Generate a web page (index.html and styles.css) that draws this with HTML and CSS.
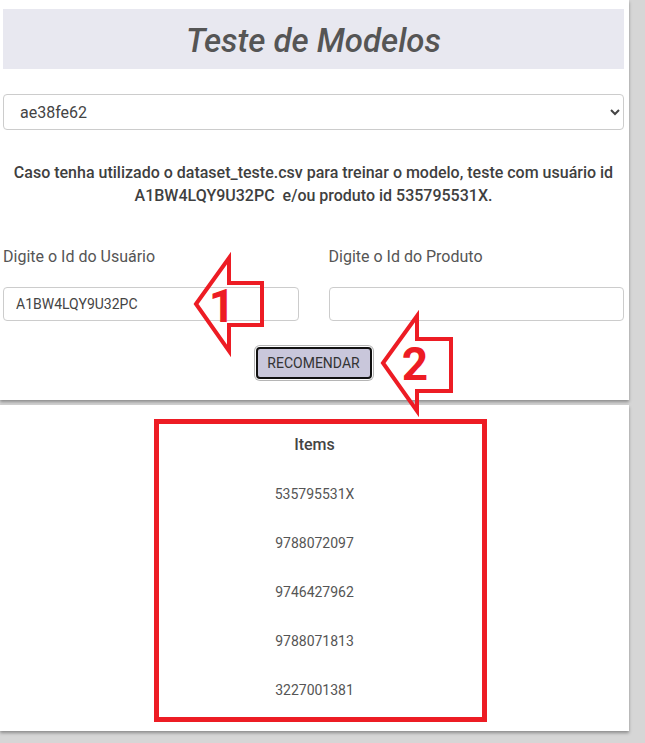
FILE: index.html
```html
<!DOCTYPE html>
<html lang="pt-BR">
<head>
<meta charset="utf-8">
<title>Teste de Modelos</title>
<link rel="stylesheet" href="styles.css">
</head>
<body>
<div class="page">
  <section class="card card-form">
    <header class="banner"><h1 class="title">Teste de Modelos</h1></header>
    <select class="model-select">
      <option>ae38fe62</option>
    </select>
    <p class="hint">Caso tenha utilizado o dataset_teste.csv para treinar o modelo, teste com usuário id<br>A1BW4LQY9U32PC&nbsp; e/ou produto id 535795531X.</p>
    <div class="fields">
      <label class="field">
        <span class="field-label">Digite o Id do Usuário</span>
        <input class="field-input" type="text" value="A1BW4LQY9U32PC">
      </label>
      <label class="field">
        <span class="field-label">Digite o Id do Produto</span>
        <input class="field-input" type="text" value="">
      </label>
    </div>
    <div class="actions"><button class="btn" type="button">RECOMENDAR</button></div>
  </section>
  <section class="card card-results">
    <ul class="items">
      <li class="items-title">Items</li>
      <li>535795531X</li>
      <li>9788072097</li>
      <li>9746427962</li>
      <li>9788071813</li>
      <li>3227001381</li>
    </ul>
  </section>
  <svg class="annotations" width="645" height="743" viewBox="0 0 645 743" aria-hidden="true">
    <g fill="none" stroke="#ed1c24" stroke-width="4" stroke-linejoin="miter">
      <polygon points="196,304 229,258 229,283 262,283 262,325 229,325 229,351"/>
      <polygon points="383,363 417,316 417,339 451,339 451,391 417,391 417,411"/>
      <rect x="156.5" y="421.5" width="328" height="298" stroke-width="5"/>
    </g>
    <text class="num" x="222" y="322" text-anchor="middle">1</text>
    <text class="num" x="415" y="380" text-anchor="middle">2</text>
  </svg>
</div>
</body>
</html>
```
FILE: styles.css
```css
html, body {
  margin: 0;
  padding: 0;
}
body {
  background: #d6d6d6;
  font-family: Roboto, "Liberation Sans", sans-serif;
  color: #444;
  width: 645px;
  height: 743px;
  overflow: hidden;
}
.page {
  position: relative;
  width: 645px;
  height: 743px;
}
.card {
  background: #fff;
  width: 629px;
  box-sizing: border-box;
  box-shadow: 0 2px 3px rgba(0, 0, 0, 0.35);
}
.card-form {
  padding: 9px 5px 21px 3px;
  display: flex;
  flex-direction: column;
}
.banner {
  background: #e8e8f0;
  height: 60px;
  display: flex;
  align-items: center;
  justify-content: center;
}
.title {
  margin: 2px 0 0;
  font-size: 33px;
  font-style: italic;
  font-weight: 500;
  color: #555;
  line-height: 1;
}
.model-select {
  margin-top: 25px;
  height: 36px;
  border: 1px solid #ccc;
  border-radius: 4px;
  background: #fff;
  font-family: Roboto, sans-serif;
  font-size: 16px;
  color: #444;
  padding: 0 12px;
}
.hint {
  margin: 31px 0 0;
  text-align: center;
  font-weight: 500;
  font-size: 16px;
  line-height: 23px;
  color: #3f3f3f;
}
.fields {
  margin-top: 40px;
  display: grid;
  grid-template-columns: 1fr 1fr;
  column-gap: 30px;
}
.field {
  display: flex;
  flex-direction: column;
}
.field-label {
  font-size: 16px;
  line-height: 19px;
  color: #555;
}
.field-input {
  margin-top: 21px;
  height: 34px;
  box-sizing: border-box;
  border: 1px solid #ccc;
  border-radius: 4px;
  padding: 0 12px;
  font-family: Roboto, sans-serif;
  font-size: 14px;
  color: #444;
  background: #fff;
}
.actions {
  margin-top: 26px;
  display: flex;
  justify-content: center;
}
.btn {
  height: 32px;
  width: 116px;
  box-sizing: border-box;
  background: #c9c7db;
  border: 2px solid #111;
  border-radius: 4px;
  box-shadow: 0 0 0 1px #fff, 0 0 0 2px #b5b5b5;
  font-family: Roboto, sans-serif;
  font-size: 14px;
  color: #333;
  padding: 0;
}
.card-results {
  margin-top: 5px;
  padding: 30px 0 31px;
}
.items {
  list-style: none;
  margin: 0;
  padding: 0;
  display: flex;
  flex-direction: column;
  align-items: center;
  gap: 29px;
  font-size: 14px;
  line-height: 20px;
  color: #555;
}
.items-title {
  font-size: 16px;
  font-weight: 500;
  color: #444;
}
.annotations {
  position: absolute;
  left: 0;
  top: 0;
  pointer-events: none;
}
.num {
  font-family: Roboto, "Liberation Sans", sans-serif;
  font-weight: 700;
  font-size: 46px;
  fill: #ed1c24;
}
```
